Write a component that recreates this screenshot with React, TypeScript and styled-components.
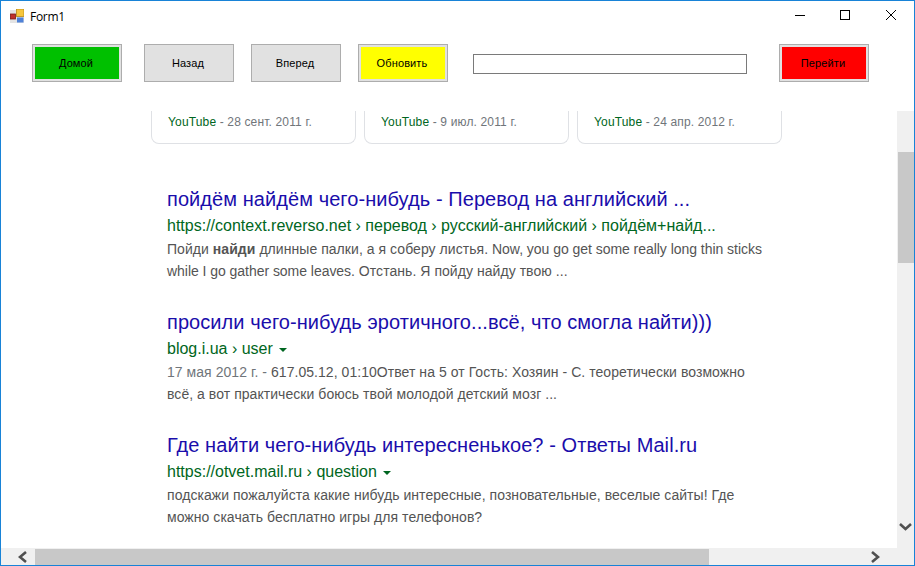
import React from 'react'
import styled, { createGlobalStyle } from 'styled-components'

const GlobalStyle = createGlobalStyle`
  html, body {
    margin: 0;
    padding: 0;
    background: #fff;
  }
`

const Window = styled.div`
  box-sizing: border-box;
  width: 915px;
  height: 566px;
  border: 1px solid #1883d7;
  display: flex;
  flex-direction: column;
  overflow: hidden;
  background: #fff;
  font-family: "Liberation Sans", Arial, sans-serif;
`

const TitleBar = styled.div`
  height: 30px;
  flex: none;
  display: flex;
  align-items: center;
  padding-left: 9px;
`

const AppIcon = styled.svg`
  width: 14px;
  height: 14px;
  margin-right: 6px;
`

const TitleText = styled.span`
  font-family: "Open Sans", "Noto Sans", sans-serif;
  font-size: 12px;
  letter-spacing: -0.3px;
  color: #000;
  flex: 1;
`

const WinButton = styled.div<{ $width: number }>`
  box-sizing: border-box;
  width: ${(p) => p.$width}px;
  height: 30px;
  padding-bottom: 2px;
  display: flex;
  align-items: center;
  justify-content: center;
`

const Toolbar = styled.div`
  box-sizing: border-box;
  height: 80px;
  flex: none;
  display: flex;
  align-items: flex-start;
  padding: 13px 0 0 31px;
`

const Button = styled.div<{ $gap?: number }>`
  box-sizing: border-box;
  width: 90px;
  height: 38px;
  margin-left: ${(p) => p.$gap ?? 0}px;
  border: 1px solid #adadad;
  background: #e1e1e1;
  padding: 2px;
`

const ButtonFace = styled.div<{ $fill?: string }>`
  box-sizing: border-box;
  height: 100%;
  padding-right: 2px;
  display: flex;
  align-items: center;
  justify-content: center;
  background: ${(p) => p.$fill ?? '#e1e1e1'};
  font-size: 11px;
  letter-spacing: 0.12px;
  color: #000;
`

const Address = styled.input`
  box-sizing: border-box;
  width: 274px;
  height: 20px;
  margin: 10px 0 0 25px;
  padding: 0 2px;
  border: 1px solid #7a7a7a;
  outline: none;
  background: #fff;
`

const Browser = styled.div`
  flex: 1;
  min-height: 0;
  display: flex;
`

const Viewport = styled.div`
  flex: 1;
  overflow: hidden;
`

const VScroll = styled.div`
  width: 17px;
  flex: none;
  background: #f0f0f0;
  display: flex;
  flex-direction: column;
  align-items: flex-end;
`

const VThumb = styled.div`
  width: 16px;
  height: 111px;
  margin-top: 41px;
  background: #c8c8c8;
`

const ArrowDown = styled.svg`
  width: 17px;
  height: 10px;
  margin-top: 259px;
`

const HScroll = styled.div`
  height: 17px;
  flex: none;
  background: #f0f0f0;
  display: flex;
  align-items: stretch;
`

const HArrow = styled.div<{ $inset: number }>`
  box-sizing: border-box;
  width: 34px;
  padding-right: ${(p) => p.$inset}px;
  flex: none;
  display: flex;
  align-items: center;
  justify-content: flex-end;
`

const HThumb = styled.div`
  width: 674px;
  margin-top: 1px;
  background: #c8c8c8;
`

const HRest = styled.div`
  flex: 1;
  display: flex;
  justify-content: flex-end;
  padding-right: 22px;
`

const Cards = styled.div`
  display: flex;
  gap: 8px;
  margin-left: 150px;
`

const Card = styled.div`
  box-sizing: border-box;
  width: 205px;
  height: 33px;
  padding: 4px 16px 0;
  border: 1px solid #dfe1e5;
  border-top: none;
  border-radius: 0 0 8px 8px;
  font-size: 12px;
  line-height: 15px;
  letter-spacing: 0.15px;
  color: #70757a;
  white-space: nowrap;
`

const Source = styled.span`
  color: #006621;
`

const Results = styled.div`
  margin: 42px 0 0 166px;
`

const Result = styled.div`
  margin-bottom: 27px;
`

const Title = styled.div`
  font-size: 20px;
  line-height: 26px;
  letter-spacing: 0.07px;
  color: #1a0dab;
  white-space: nowrap;
`

const Url = styled.div`
  box-sizing: border-box;
  display: flex;
  align-items: center;
  height: 26px;
  padding-top: 1px;
  font-size: 16px;
  color: #006621;
  white-space: nowrap;
`

const Caret = styled.span`
  width: 0;
  height: 0;
  margin: 3px 0 0 6px;
  border-top: 4.5px solid #006621;
  border-left: 4px solid transparent;
  border-right: 4px solid transparent;
`

const Snippet = styled.div`
  font-size: 14px;
  line-height: 22px;
  letter-spacing: 0.05px;
  color: #545454;
  white-space: nowrap;
`

// латиница в оригинале чуть уже кириллицы
const Latin = styled.span`
  letter-spacing: -0.04px;
`

const DateText = styled.span`
  color: #70757a;
`

const chevron = { fill: 'none', stroke: '#505050', strokeWidth: 2.6 }

export default function App() {
  return (
    <>
      <GlobalStyle />
      <Window>
        <TitleBar>
          <AppIcon viewBox="0 0 14 14">
            <rect x="0" y="1" width="14" height="13" fill="#e4e4e4" />
            <rect x="6.5" y="0" width="7.5" height="7.5" fill="#f6c63c" stroke="#b98a14" strokeWidth="0.8" />
            <rect x="0.5" y="5" width="5" height="5" fill="#c0302a" stroke="#7c1a16" strokeWidth="0.8" />
            <rect x="7" y="8.5" width="6.5" height="5" fill="#4f82d8" />
          </AppIcon>
          <TitleText>Form1</TitleText>
          <WinButton $width={44}>
            <svg width="10" height="10" viewBox="0 0 10 10">
              <path d="M0 5.5h10" stroke="#000" strokeWidth="1" />
            </svg>
          </WinButton>
          <WinButton $width={46}>
            <svg width="10" height="10" viewBox="0 0 10 10">
              <rect x="0.5" y="0.5" width="9" height="9" fill="none" stroke="#000" />
            </svg>
          </WinButton>
          <WinButton $width={46}>
            <svg width="10" height="10" viewBox="0 0 10 10">
              <path d="M0 0l10 10M10 0L0 10" stroke="#000" strokeWidth="1" />
            </svg>
          </WinButton>
        </TitleBar>
        <Toolbar>
          <Button>
            <ButtonFace $fill="#00c000">Домой</ButtonFace>
          </Button>
          <Button $gap={22}>
            <ButtonFace>Назад</ButtonFace>
          </Button>
          <Button $gap={17}>
            <ButtonFace>Вперед</ButtonFace>
          </Button>
          <Button $gap={17}>
            <ButtonFace $fill="#ffff00">Обновить</ButtonFace>
          </Button>
          <Address />
          <Button $gap={32}>
            <ButtonFace $fill="#ff0000">Перейти</ButtonFace>
          </Button>
        </Toolbar>
        <Browser>
          <Viewport>
            <Cards>
              <Card>
                <Source>YouTube</Source> - 28 сент. 2011 г.
              </Card>
              <Card>
                <Source>YouTube</Source> - 9 июл. 2011 г.
              </Card>
              <Card>
                <Source>YouTube</Source> - 24 апр. 2012 г.
              </Card>
            </Cards>
            <Results>
              <Result>
                <Title>пойдём найдём чего-нибудь - Перевод на английский ...</Title>
                <Url>https://context.reverso.net › перевод › русский-английский › пойдём+найд...</Url>
                <Snippet>
                  Пойди <b>найди</b> длинные палки, а я соберу листья. <Latin>Now, you go get some really long thin sticks</Latin>
                  <br />
                  <Latin>while I go gather some leaves.</Latin> Отстань. Я пойду найду твою ...
                </Snippet>
              </Result>
              <Result>
                <Title>просили чего-нибудь эротичного...всё, что смогла найти)))</Title>
                <Url>
                  blog.i.ua › user
                  <Caret />
                </Url>
                <Snippet>
                  <DateText>17 мая 2012 г. - </DateText>617.05.12, 01:10Ответ на 5 от Гость: Хозяин - С. теоретически возможно
                  <br />
                  всё, а вот практически боюсь твой молодой детский мозг ...
                </Snippet>
              </Result>
              <Result>
                <Title>Где найти чего-нибудь интересненькое? - Ответы Mail.ru</Title>
                <Url>
                  https://otvet.mail.ru › question
                  <Caret />
                </Url>
                <Snippet>
                  подскажи пожалуйста какие нибудь интересные, позновательные, веселые сайты! Где
                  <br />
                  можно скачать бесплатно игры для телефонов?
                </Snippet>
              </Result>
            </Results>
          </Viewport>
          <VScroll>
            <VThumb />
            <ArrowDown viewBox="0 0 17 10">
              <path d="M3 2l5.5 5L14 2" {...chevron} />
            </ArrowDown>
          </VScroll>
        </Browser>
        <HScroll>
          <HArrow $inset={7}>
            <svg width="10" height="12" viewBox="0 0 10 12">
              <path d="M8 1L2 6L8 11" {...chevron} />
            </svg>
          </HArrow>
          <HThumb />
          <HRest>
            <HArrow $inset={12}>
              <svg width="10" height="12" viewBox="0 0 10 12">
                <path d="M2 1L8 6L2 11" {...chevron} />
              </svg>
            </HArrow>
          </HRest>
        </HScroll>
      </Window>
    </>
  )
}
